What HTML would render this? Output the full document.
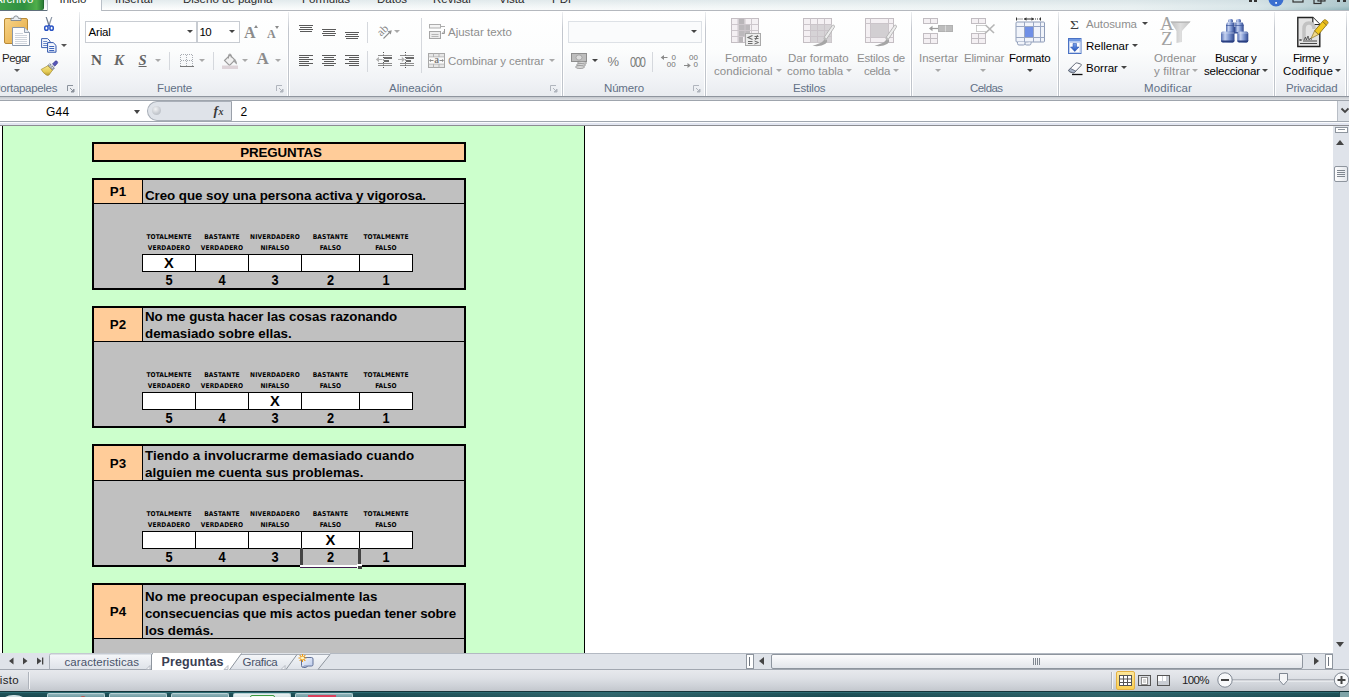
<!DOCTYPE html>
<html lang="es">
<head>
<meta charset="utf-8">
<title>Excel - Preguntas</title>
<style>
html,body{margin:0;padding:0;}
body{width:1349px;height:697px;overflow:hidden;position:relative;background:#fff;font-family:"Liberation Sans",sans-serif;font-size:11.5px;color:#1e1e1e;}
#app{position:absolute;left:0;top:0;width:1349px;height:697px;overflow:hidden;}
#app div,#app span,#app svg{position:absolute;white-space:nowrap;}
#app svg{overflow:visible;}
/* top tab strip */
#tabstrip{left:0;top:0;width:1349px;height:10px;background:linear-gradient(rgba(205,219,223,.55) 0%,rgba(225,234,236,.35) 60%,rgba(255,255,255,0) 100%),linear-gradient(90deg,#ffffff 0%,#f7fafa 55%,#ebf2f3 84%,#d7e5e8 93%,#8fb3b9 100%);border-bottom:1px solid #b4b8be;}
.tab{top:-7.500px;font-size:11.5px;line-height:13px;color:#2a2a2a;}
#ribbon{left:0;top:11px;width:1349px;height:86px;background:linear-gradient(#ffffff 0%,#fcfdfd 45%,#f1f3f6 80%,#e8ebef 100%);}
.gsep{top:12px;width:1px;height:84px;background:linear-gradient(rgba(196,201,208,.3),#c3c7ce 20%,#bfc4cb 100%);box-shadow:1px 0 0 rgba(255,255,255,.95),-1px 0 0 rgba(255,255,255,.95);}
.glabel{top:82px;color:#627086;font-size:11.5px;line-height:13px;}
.rt{font-size:11.5px;line-height:13px;color:#1e1e1e;}
.dis{color:#8e8e8e;}
.arr{width:0;height:0;border-left:3px solid transparent;border-right:3px solid transparent;border-top:3px solid #444;}
.arr.d{border-top-color:#a9a9a9;}
.isep{width:1px;height:18px;background:#d5d8dd;}
.combo{height:19px;border:1px solid #c8ccd2;background:#fff;box-sizing:content-box;}
/* formula */
#fbar{left:0;top:97px;width:1349px;height:29px;background:#fff;}
/* sheet */
#sheet{left:0;top:126px;width:1333px;height:527px;background:#fff;overflow:hidden;}
.q{background:#c0c0c0;border:2px solid #000;box-sizing:border-box;left:92px;width:374px;}
.q .pl{left:0;top:0;width:48px;background:#fc9;border-right:1px solid #000;font:bold 13.33px "Liberation Sans",sans-serif;text-align:center;color:#000;}
.q .qt{left:51px;font:bold 13.33px/17px "Liberation Sans",sans-serif;color:#000;}
.q .hl{left:0;width:370px;height:1px;background:#000;}
.lab{font:bold 6.6px/11px "DejaVu Sans Condensed","DejaVu Sans","Liberation Sans",sans-serif;text-align:center;color:#000;letter-spacing:.12px;}
.num{font:bold 13.33px/15px "Liberation Sans",sans-serif;text-align:center;color:#000;transform:scale(.96,1.1);transform-origin:50% 80%;}
.box{background:#fff;border:1px solid #000;box-sizing:border-box;height:18px;font:bold 14.67px/16px "Liberation Sans",sans-serif;text-align:center;color:#000;}
/* bottom */
#tabsbar{left:0;top:653px;width:1349px;height:17px;background:#dfe3e9;}
#status{left:0;top:670px;width:1349px;height:21px;background:linear-gradient(#e7e9ed 0%,#dde0e5 40%,#ced2d8 75%,#c3c7cd 100%);}
#taskbar{left:0;top:691px;width:1349px;height:6px;background:linear-gradient(90deg,rgba(255,255,255,0) 0%,rgba(255,255,255,0) 28%,rgba(120,180,185,.22) 45%,rgba(255,255,255,0) 62%,rgba(120,180,185,.2) 82%,rgba(255,255,255,0) 100%),linear-gradient(#3d7077,#1f5259 40%,#1a4a51);}
.tb{top:693px;width:58px;height:6px;box-sizing:border-box;border:1px solid #b9d2d6;border-bottom:none;border-radius:2px 2px 0 0;background:linear-gradient(#8fb4ba,#5c8b93);}

</style>
</head>
<body>
<div id="app">
<!-- tabs.html -->
<div id="tabstrip">
 <div style="left:0;top:0;width:43px;height:10px;border-radius:0 0 2px 0;background:linear-gradient(90deg,#3fa048 0%,#2f9040 55%,#4fae4a 85%,#2a7d36 100%);border-right:1px solid #1f6a2c;"></div>
 <div class="under-archivo" style="left:0;top:10px;width:47px;height:1px;background:#5f6f7c;"></div>
 <span class="tab" style="left:-5px;color:#fff;">Archivo</span>
 <div style="left:47px;top:-4px;width:53px;height:15px;background:#fff;border:1px solid #b9c0c8;border-bottom:none;border-radius:3px 3px 0 0;"></div>
 <span class="tab" style="left:59.500px;">Inicio</span>
 <span class="tab" style="left:115px;">Insertar</span>
 <span class="tab" style="left:183px;">Diseño de página</span>
 <span class="tab" style="left:302px;">Fórmulas</span>
 <span class="tab" style="left:377px;">Datos</span>
 <span class="tab" style="left:433px;">Revisar</span>
 <span class="tab" style="left:499px;">Vista</span>
 <span class="tab" style="left:552px;">PDF</span>
 <!-- top-right window icons (clipped) -->
 <svg style="left:1240px;top:1px" width="109" height="10" viewBox="0 0 109 10">
  <rect x="9" y="-3" width="3" height="4" fill="#333"/><rect x="14" y="-3" width="3" height="4" fill="#333"/>
  <circle cx="36" cy="-2" r="7.5" fill="#3b6fd0"/><rect x="35.3" y="1" width="1.6" height="1.8" fill="#fff"/>
  <rect x="53" y="-3" width="10" height="4" fill="none" stroke="#333" stroke-width="1.2"/>
  <rect x="74" y="-3" width="7" height="5.5" fill="none" stroke="#333" stroke-width="1.2"/><rect x="78" y="-4" width="7" height="4" fill="none" stroke="#333" stroke-width="1.2"/>
  <rect x="97" y="-3" width="3" height="4" fill="#333"/><rect x="103" y="-3" width="3" height="4" fill="#333"/>
 </svg>
</div>

<!-- ribbon1.html -->
<div id="ribbon"></div>
<!-- ===== Portapapeles ===== -->
<svg style="left:3px;top:15px" width="30" height="33" viewBox="0 0 30 33">
 <defs><linearGradient id="gclip" x1="0" y1="0" x2="1" y2="1"><stop offset="0" stop-color="#f7d48a"/><stop offset="1" stop-color="#e5a93e"/></linearGradient></defs>
 <rect x="1.5" y="3.5" width="23" height="25" rx="1.5" fill="url(#gclip)" stroke="#b98a36" stroke-width="1"/>
 <path d="M8 5.5 h10 v-2.2 h-2.6 a2.4 2.4 0 0 0 -4.8 0 h-2.6z" fill="#e9edf2" stroke="#7d848d" stroke-width=".9"/>
 <path d="M9.5 12.5 h12 l5 5 v13 h-17z" fill="#fdfdfe" stroke="#8a97a8" stroke-width="1"/>
 <path d="M21.5 12.5 v5 h5" fill="#e4e9f0" stroke="#8a97a8" stroke-width=".9"/>
 <path d="M12 18.5h8M12 20.5h12M12 22.5h12M12 24.5h12M12 26.5h12M12 28.5h12" stroke="#c3c9d2" stroke-width=".8"/>
</svg>
<span class="rt" style="left:2px;top:52px;letter-spacing:-0.52px;">Pegar</span>
<div class="arr" style="left:14px;top:69px;border-top-color:#5a5a5a;"></div>
<!-- scissors -->
<svg style="left:43px;top:16px" width="12" height="16" viewBox="0 0 12 16">
 <path d="M2.600 1 L3.800 1 L6.800 9.500 L5.600 10.500z" fill="#6f7c8f"/>
 <path d="M9.400 1 L8.200 1 L5.200 9.500 L6.400 10.500z" fill="#8b96a6"/>
 <ellipse cx="3.400" cy="12.200" rx="1.700" ry="2.100" fill="none" stroke="#2b54c4" stroke-width="1.500"/>
 <ellipse cx="8.600" cy="12.200" rx="1.700" ry="2.100" fill="none" stroke="#2b54c4" stroke-width="1.500"/>
 <path d="M4.400 10.600L6 9M7.600 10.600L6 9" stroke="#2b54c4" stroke-width="1.300" fill="none"/>
</svg>
<!-- copy -->
<svg style="left:41px;top:38px" width="16" height="15" viewBox="0 0 16 15">
 <path d="M.6 .6 h6 l2.4 2.4 v6.6 h-8.4z" fill="#f4f7fc" stroke="#3b5fb0" stroke-width="1"/>
 <path d="M2.2 3.5h4M2.2 5.5h5M2.2 7.5h5" stroke="#5a7cc4" stroke-width=".9"/>
 <path d="M6.6 4.6 h5.6 l2.8 2.8 v6.8 h-8.4z" fill="#f4f7fc" stroke="#2f55ad" stroke-width="1"/>
 <path d="M8.2 8.5h5M8.2 10.5h5M8.2 12.5h5" stroke="#3f66bb" stroke-width="1"/>
</svg>
<div class="arr" style="left:61px;top:44px;border-top-color:#555"></div>
<!-- format painter -->
<svg style="left:41px;top:60px" width="17" height="16" viewBox="0 0 17 16">
 <defs><linearGradient id="gbr" x1="0" y1="0" x2="0" y2="1"><stop offset="0" stop-color="#f5e58c"/><stop offset=".6" stop-color="#e6cc55"/><stop offset="1" stop-color="#b59a35"/></linearGradient></defs>
 <path d="M11.500 4 L14 1.300 a1.600 1.600 0 0 1 2.300 2.200 L13.800 6.200z" fill="#5656b8" stroke="#33338a" stroke-width=".6"/>
 <path d="M8.800 3.600 l4.600 4.400 -2 2.200 -4.600 -4.400z" fill="#a9aeb8" stroke="#5d636d" stroke-width=".7"/>
 <path d="M8 5 l1.500 -1.500 M9.500 6.500 l1.500 -1.500 M11 8 l1.500 -1.500" stroke="#e8eaee" stroke-width=".7"/>
 <path d="M6.800 5.800 l4.600 4.400 -3.400 4.800 q-1.500 1 -3 -.2 q-3 -2 -4.800 -5.400z" fill="url(#gbr)" stroke="#a88f30" stroke-width=".7"/>
</svg>
<span class="glabel" style="left:-7px;letter-spacing:-0.30px;">Portapapeles</span>
<svg class="launch" style="left:67px;top:85px" width="8" height="8" viewBox="0 0 8 8"><path d="M.5 6V.5H6" fill="none" stroke="#8b929c" stroke-width="1"/><path d="M3 3l3.5 3.5M7 4v3H4z" stroke="#8b929c" stroke-width="1" fill="#8b929c"/></svg>
<div class="gsep" style="left:79px;"></div>

<!-- ===== Fuente ===== -->
<div class="combo" style="left:85px;top:21px;width:110px;height:20px;"></div>
<span class="rt" style="left:88.500px;top:26px;font-size:11.500px;color:#000;letter-spacing:-0.16px;">Arial</span>
<div class="arr" style="left:187px;top:30px;"></div>
<div class="combo" style="left:197px;top:21px;width:41px;height:20px;"></div>
<span class="rt" style="left:199.500px;top:26px;font-size:11.500px;color:#000;letter-spacing:-0.70px;">10</span>
<div class="arr" style="left:229px;top:30px;"></div>
<span style="left:244px;top:23px;font:bold 16px/20px 'Liberation Serif',serif;color:#8c8c8c;">A</span>
<div style="left:254px;top:25px;width:0;height:0;border-left:2.5px solid transparent;border-right:2.5px solid transparent;border-bottom:3px solid #8a8a8a;"></div>
<span style="left:267px;top:26px;font:bold 12px/16px 'Liberation Serif',serif;color:#8c8c8c;">A</span>
<div class="arr d" style="left:275px;top:26px;border-left-width:2.5px;border-right-width:2.5px;border-top-color:#8a8a8a"></div>
<span style="left:91px;top:52px;font:bold 14px/18px 'Liberation Serif',serif;color:#5c5c5c;transform:scaleX(1.08);transform-origin:0 0;">N</span>
<span style="left:114px;top:51px;font:italic bold 15px/18px 'Liberation Serif',serif;color:#666;">K</span>
<span style="left:138.500px;top:51px;font:italic bold 14.500px/18px 'Liberation Serif',serif;color:#666;text-decoration:underline;">S</span>
<div class="arr d" style="left:155px;top:59px;"></div>
<div class="isep" style="left:169px;top:52px;"></div>
<svg style="left:180px;top:54px" width="14" height="14" viewBox="0 0 14 14" shape-rendering="crispEdges"><path d="M.5 .5h12M.5 6.5h12M.5 .5v12M6.5 .5v12M12.500 .5v12" stroke="#a9adb3" stroke-width="1" stroke-dasharray="1 1" fill="none"/><path d="M0 12.500h13.500" stroke="#777" stroke-width="1.200"/></svg>
<div class="arr d" style="left:199px;top:59px;"></div>
<div class="isep" style="left:213px;top:52px;"></div>
<svg style="left:222px;top:53px" width="17" height="16" viewBox="0 0 17 16">
 <path d="M2.500 7.500 L8 2 L13 7 L7.500 12.500z" fill="#f0f0f0" stroke="#9a9a9a" stroke-width="1.100"/>
 <path d="M6.500 5.500 V2.500 a1.400 1.400 0 0 1 2.800 0 V4.500" fill="none" stroke="#9a9a9a" stroke-width="1"/>
 <path d="M12 6 q3 1 3 5.500 q-2.500 -1 -3.500 -4z" fill="#a0a0a0"/>
 <rect x="0" y="12.500" width="16" height="3.500" fill="#ddd3d8"/>
</svg>
<div class="arr d" style="left:242px;top:59px;"></div>
<span style="left:256.500px;top:49px;font:bold 17px/20px 'Liberation Serif',serif;color:#8c8c8c;">A</span>
<div class="arr d" style="left:275px;top:59px;"></div>
<span class="glabel" style="left:157px;letter-spacing:-0.14px;">Fuente</span>
<svg class="launch" style="left:276px;top:85px" width="8" height="8" viewBox="0 0 8 8"><path d="M.5 6V.5H6" fill="none" stroke="#b0b5bd" stroke-width="1"/><path d="M3 3l3.500 3.500M7 4v3H4z" stroke="#b0b5bd" stroke-width="1" fill="#b0b5bd"/></svg>
<div class="gsep" style="left:288px;"></div>

<!-- ribbon2.html -->
<!-- ===== Alineación ===== -->
<svg style="left:298px;top:22px" width="62" height="46" viewBox="0 0 62 46">
 <g stroke="#5a5a5a" stroke-width="1" fill="none">
  <!-- top / middle / bottom vertical alignment -->
  <path d="M1 3.500h14M2 5.500h12M1 7.500h14M2 9.500h12"/>
  <path d="M24 7.500h14M25 9.500h12M24 11.500h14M25 13.500h12"/>
  <path d="M47 10.500h14M48 12.500h12M47 14.500h14M48 16.500h12"/>
  <!-- left / center / right -->
  <path d="M1 33.500h14M1 35.500h10M1 37.500h14M1 39.500h10M1 41.500h14M1 43.500h10"/>
  <path d="M24 33.500h14M26 35.500h10M24 37.500h14M26 39.500h10M24 41.500h14M26 43.500h10"/>
  <path d="M47 33.500h14M51 35.500h10M47 37.500h14M51 39.500h10M47 41.500h14M51 43.500h10"/>
 </g>
</svg>
<div class="isep" style="left:367px;top:22px;height:21px;"></div>
<div class="isep" style="left:367px;top:51px;height:21px;"></div>
<!-- orientation -->
<svg style="left:376px;top:23px" width="18" height="17" viewBox="0 0 18 17">
 <text x="0" y="0" transform="translate(5.300 13.800) rotate(-45)" font-family="Liberation Serif,serif" font-size="11.500" fill="#858585">ab</text>
 <path d="M7.500 15.500 L14.500 8.500" stroke="#8f8f8f" stroke-width="1.100" fill="none"/><path d="M15.800 7.200 l-4.200 1 3.200 3.200z" fill="#8f8f8f"/>
</svg>
<div class="arr d" style="left:394px;top:30px;"></div>
<!-- indent icons -->
<svg style="left:375px;top:52px" width="40" height="16" viewBox="0 0 40 16">
 <g fill="none" stroke="#8d8d8d" stroke-width="1">
  <path d="M3 3.500h14M3 11.500h14M3 13.500h14"/>
  <path d="M25 3.500h14M25 11.500h14M25 13.500h14"/>
 </g>
 <g fill="#6b6b6b"><rect x="9" y="5" width="8" height="2"/><rect x="9" y="8" width="5" height="2"/><rect x="31" y="5" width="8" height="2"/><rect x="31" y="8" width="5" height="2"/></g>
 <path d="M8.500 0v16M30.500 0v16" stroke="#555" stroke-width="1" stroke-dasharray="1 1.500" fill="none"/>
 <path d="M2.500 7.500h5M23 7.500h5" stroke="#b3b3b3" stroke-width="1.200" fill="none"/>
 <path d="M.8 7.500l3.200-2.800v5.600zM30 7.500l-3.200-2.800v5.600z" fill="#b3b3b3"/>
</svg>
<div class="isep" style="left:421px;top:18px;height:55px;"></div>
<!-- wrap text icon -->
<svg style="left:428px;top:24px" width="18" height="16" viewBox="0 0 18 16">
 <rect x="1.500" y=".5" width="11" height="3.500" fill="#f4f4f4" stroke="#adadad"/>
 <rect x="1.500" y="7.500" width="11" height="7" fill="#ececec" stroke="#a5a5a5"/>
 <path d="M3.500 10.500h7M3.500 12.500h7" stroke="#b5b5b5"/>
 <path d="M12.500 2.500h4.500" fill="none" stroke="#adadad"/>
 <path d="M16.500 5v4.500h-2.500M14 9.500l2.500-2.500" fill="none" stroke="#9a9a9a" stroke-width="1"/>
</svg>
<span class="rt dis" style="left:448px;top:26px;">Ajustar texto</span>
<!-- merge icon -->
<svg style="left:428px;top:53px" width="18" height="16" viewBox="0 0 18 16">
 <rect x=".5" y=".5" width="16" height="14" fill="#e6e6e6" stroke="#a8a8a8"/>
 <path d="M.5 4h16M.5 11h16M5.500 .5v3.500M11 .5v3.500M5.500 11v3.500M11 11v3.500" stroke="#b3b3b3" fill="none"/>
 <rect x="1" y="4.500" width="15" height="6" fill="#fafafa"/>
 <text x="8.500" y="10.300" font-family="Liberation Serif,serif" font-weight="bold" font-size="9.500" text-anchor="middle" fill="#7c7c7c">a</text>
 <path d="M2 7.500h3.500M11.500 7.500h3.500" stroke="#8a8a8a" stroke-width="1"/><path d="M1 7.500l2-1.500v3zM16 7.500l-2-1.500v3z" fill="#8a8a8a"/>
</svg>
<span class="rt dis" style="left:448px;top:55px;letter-spacing:-0.09px;">Combinar y centrar</span>
<div class="arr d" style="left:549px;top:59px;"></div>
<span class="glabel" style="left:389px;">Alineación</span>
<svg class="launch" style="left:550px;top:85px" width="8" height="8" viewBox="0 0 8 8"><path d="M.5 6V.5H6" fill="none" stroke="#b0b5bd" stroke-width="1"/><path d="M3 3l3.500 3.500M7 4v3H4z" stroke="#b0b5bd" stroke-width="1" fill="#b0b5bd"/></svg>
<div class="gsep" style="left:562px;"></div>

<!-- ===== Número ===== -->
<div class="combo" style="left:568px;top:21px;width:132px;height:20px;background:#fafbfc;border-color:#dde1e6;"></div>
<div class="arr" style="left:691px;top:30px;"></div>
<!-- currency icon -->
<svg style="left:571px;top:53px" width="18" height="16" viewBox="0 0 18 16">
 <rect x=".5" y=".5" width="15" height="8" fill="#bdbdbd" stroke="#8e8e8e"/>
 <ellipse cx="8" cy="4.500" rx="3" ry="2.600" fill="#dcdcdc" stroke="#9a9a9a" stroke-width=".7"/>
 <g fill="#d9d9d9" stroke="#8e8e8e" stroke-width=".8"><ellipse cx="11" cy="10" rx="4.500" ry="1.500"/><ellipse cx="10" cy="12" rx="4.500" ry="1.500"/><ellipse cx="9" cy="14" rx="4.500" ry="1.500"/></g>
</svg>
<div class="arr" style="left:592px;top:59px;"></div>
<span style="left:607.500px;top:53px;font:13px/18px 'Liberation Sans',sans-serif;color:#7c7c7c;">%</span>
<span style="left:630px;top:53px;font:11px/18px 'Liberation Sans',sans-serif;color:#7c7c7c;letter-spacing:-1.200px;transform:scaleY(1.250);">000</span>
<div class="isep" style="left:652px;top:52px;height:20px;"></div>
<svg style="left:661px;top:53px" width="38" height="16" viewBox="0 0 38 16">
 <g font-family="Liberation Sans,sans-serif" font-size="8" fill="#737373">
  <text x="10.500" y="6.800">0</text><text x="5.800" y="14.300">00</text>
  <text x="28" y="6.800">00</text><text x="32.500" y="14.300">0</text>
 </g>
 <path d="M1 4.500h5.500M23 12.500h5.500" stroke="#8a8a8a" stroke-width="1.100" fill="none"/>
 <path d="M-.3 4.500l3.300-2.600v5.200z M29.800 12.500l-3.300-2.600v5.200z" fill="#8a8a8a"/>
</svg>
<span class="glabel" style="left:604px;letter-spacing:-0.17px;">Número</span>
<svg class="launch" style="left:693px;top:85px" width="8" height="8" viewBox="0 0 8 8"><path d="M.5 6V.5H6" fill="none" stroke="#b0b5bd" stroke-width="1"/><path d="M3 3l3.500 3.500M7 4v3H4z" stroke="#b0b5bd" stroke-width="1" fill="#b0b5bd"/></svg>
<div class="gsep" style="left:705px;"></div>

<!-- ribbon3.html -->
<!-- ===== Estilos ===== -->
<!-- Formato condicional -->
<svg style="left:731px;top:18px" width="31" height="29" viewBox="0 0 31 29">
 <rect x=".5" y=".5" width="27" height="24" fill="#f4f0f3" stroke="#c4bec3"/>
 <rect x="7.500" y="1" width="6" height="6" fill="#b9b6b9"/><rect x="7.500" y="7" width="11.500" height="11.500" fill="#bcb9bc"/><rect x="7.500" y="18.500" width="4.500" height="6" fill="#b9b6b9"/>
 <path d="M.5 6.500h27M.5 12.500h27M.5 18.500h27M7 .5v24M14 .5v24M20.500 .5v24" stroke="#cdc7cc" fill="none"/>
 <rect x="14.500" y="15.500" width="15" height="12" fill="#ececec" stroke="#a9a9a9"/>
 <path d="M21.500 17.500l-4.500 2 4.500 2M17 23.500h4.500M17 25.500h4.500" stroke="#6c6c6c" stroke-width="1.100" fill="none"/>
 <path d="M23.500 18.500h4M23.500 20.500h4M26.500 17l-2 5M23.500 23l4 1.500-4 1.500" stroke="#6c6c6c" stroke-width="1" fill="none"/>
</svg>
<span class="rt dis" style="left:725px;top:52px;letter-spacing:-0.13px;">Formato</span>
<span class="rt dis" style="left:714px;top:65px;letter-spacing:0.10px;">condicional</span>
<div class="arr d" style="left:776px;top:69px;"></div>
<!-- Dar formato como tabla -->
<svg style="left:803px;top:18px" width="32" height="29" viewBox="0 0 32 29">
 <rect x=".5" y=".5" width="28" height="24" fill="#f4f0f3" stroke="#c4bec3"/>
 <rect x="7.500" y="6.500" width="21" height="18" fill="#d6d3d6"/>
 <path d="M.5 6.500h28M.5 12.500h28M.5 18.500h28M7.500 .5v24M14.500 .5v24M21.500 .5v24" stroke="#cbc5ca" fill="none"/>
 <path d="M21.500 20.500 q-1 3.500 -5.500 5 q-3 1.200 -6.500 2.300 q8.500 1.200 13 -2 q2.500 -2 1.500 -3.800z" fill="#a6a6a6"/>
 <path d="M29.300 7.500 L21.200 19.300 L23.600 21 L31.300 9.300 q.6 -1.600 -.4 -2.100 q-.9 -.5 -1.600 .3z" fill="#ededed" stroke="#ababab" stroke-width=".8"/>
 <path d="M21.200 19.300 l2.400 1.700 l-1 1.500 l-2.400 -1.700z" fill="#bdbdbd"/>
</svg>
<span class="rt dis" style="left:788px;top:52px;">Dar formato</span>
<span class="rt dis" style="left:787px;top:65px;">como tabla</span>
<div class="arr d" style="left:846px;top:69px;"></div>
<!-- Estilos de celda -->
<svg style="left:865px;top:18px" width="32" height="29" viewBox="0 0 32 29">
 <rect x=".5" y=".5" width="28" height="24" fill="#f4f0f3" stroke="#c4bec3"/>
 <path d="M.5 5.500h28M.5 19.500h28M5.500 .5v24M23.500 .5v24" stroke="#cbc5ca" fill="none"/>
 <rect x="6" y="6" width="17" height="13" fill="#d2cfd2"/>
 <path d="M21.500 20.500 q-1 3.500 -5.500 5 q-3 1.200 -6.500 2.300 q8.500 1.200 13 -2 q2.500 -2 1.500 -3.800z" fill="#a6a6a6"/>
 <path d="M29.300 7.500 L21.200 19.300 L23.600 21 L31.300 9.300 q.6 -1.600 -.4 -2.100 q-.9 -.5 -1.600 .3z" fill="#ededed" stroke="#ababab" stroke-width=".8"/>
 <path d="M21.200 19.300 l2.400 1.700 l-1 1.500 l-2.400 -1.700z" fill="#bdbdbd"/>
</svg>
<span class="rt dis" style="left:857px;top:52px;letter-spacing:-0.18px;">Estilos de</span>
<span class="rt dis" style="left:864px;top:65px;letter-spacing:-0.28px;">celda</span>
<div class="arr d" style="left:893px;top:69px;"></div>
<span class="glabel" style="left:793px;letter-spacing:-0.22px;">Estilos</span>
<div class="gsep" style="left:911px;"></div>

<!-- ===== Celdas ===== -->
<svg style="left:922px;top:18px" width="32" height="27" viewBox="0 0 32 27">
 <g fill="#f4f0f3" stroke="#c2bdc2"><rect x="1.500" y=".5" width="14" height="5"/><rect x="1.500" y="15.500" width="14" height="10"/></g>
 <path d="M8.500 .5v5M8.500 15.500v10M1.500 20.500h14" stroke="#c2bdc2" fill="none"/>
 <rect x="16.500" y="7.500" width="14" height="6" fill="#bdbdbd" stroke="#b1b1b1"/><path d="M23.500 7.500v6" stroke="#dadada"/>
 <path d="M8.500 10.500h7.500" stroke="#9c9c9c" stroke-width="1.200"/><path d="M7 10.500l3.500-2.700v5.400z" fill="#9c9c9c"/>
</svg>
<span class="rt dis" style="left:919px;top:52px;">Insertar</span>
<div class="arr d" style="left:935px;top:69px;"></div>
<svg style="left:971px;top:18px" width="25" height="27" viewBox="0 0 25 27">
 <g fill="#f4f0f3" stroke="#c2bdc2"><rect x=".5" y=".5" width="14" height="5"/><rect x=".5" y="15.500" width="14" height="10"/></g>
 <path d="M7.500 .5v5M7.500 15.500v10M.5 20.500h14" stroke="#c2bdc2" fill="none"/>
 <path d="M5.500 7.500h9M5.500 13.500h9M5.500 7.500v6" fill="none" stroke="#9d9d9d" stroke-dasharray="1 1"/>
 <path d="M14.500 7l8.500 8M23.500 6.500l-9.500 9" stroke="#b5b5b5" stroke-width="1.600" fill="none"/>
</svg>
<span class="rt dis" style="left:964px;top:52px;letter-spacing:-0.19px;">Eliminar</span>
<div class="arr d" style="left:980px;top:69px;"></div>
<svg style="left:1015px;top:16px" width="31" height="30" viewBox="0 0 31 30">
 <path d="M1.500 1.500v3M25.500 1.500v3M9 3h10" stroke="#333" stroke-width="1" fill="none"/><path d="M2.500 3h6M20 3h5" stroke="#333" stroke-dasharray="1 1" fill="none"/>
 <path d="M9 3l2.500-1.800v3.600zM19 3l-2.500-1.800v3.600z" fill="#333"/>
 <rect x="1" y="6" width="28.500" height="20" rx="1" fill="#f1f4fa" stroke="#8e9cb8"/>
 <path d="M1 10.500h28.500M1 21.500h28.500M9.500 6v20M18.500 6v20M25.500 6v20" stroke="#9aa7c2" fill="none"/>
 <rect x="10" y="11" width="8" height="10" fill="#6f8fe6"/>
 <path d="M2.500 26v1.500q0 1.500 1.500 1.500h4.500q1.500 0 1.500-1.500V26M10 27.500q0 1.500 1.500 1.500h3q1.500 0 1.500-1.500V26" fill="#f1f4fa" stroke="#8e9cb8"/>
</svg>
<span class="rt" style="left:1009px;top:52px;color:#000;letter-spacing:-0.18px;">Formato</span>
<div class="arr" style="left:1027px;top:69px;"></div>
<span class="glabel" style="left:970px;letter-spacing:-0.54px;">Celdas</span>
<div class="gsep" style="left:1058px;"></div>

<!-- ===== Modificar ===== -->
<span style="left:1069.500px;top:15.500px;font:13.500px/18px 'Liberation Serif',serif;color:#3c3c3c;transform:scaleX(1.150);transform-origin:0 0;">Σ</span>
<span class="rt dis" style="left:1086px;top:18px;letter-spacing:-0.11px;">Autosuma</span>
<div class="arr" style="left:1142px;top:22px;"></div>
<svg style="left:1068px;top:38px" width="14" height="16" viewBox="0 0 14 16">
 <defs><linearGradient id="gfill" x1="0" y1="0" x2="0" y2="1"><stop offset="0" stop-color="#7aa3ee"/><stop offset="1" stop-color="#1f50b8"/></linearGradient></defs>
 <rect x=".5" y=".5" width="12.500" height="15" fill="#fbfcfe" stroke="#4a72c4"/>
 <rect x="1" y="1" width="11.500" height="2.500" fill="#6f98e2"/>
 <rect x="1.500" y="4.500" width="10.500" height="10" fill="none" stroke="#c5d3ee"/>
 <path d="M5 5.500h3.500v3.500h2.500L6.750 13.500 2.500 9H5z" fill="url(#gfill)" stroke="#1d49a6" stroke-width=".5"/>
</svg>
<span class="rt" style="left:1086px;top:40px;color:#000;">Rellenar</span>
<div class="arr" style="left:1132px;top:44px;"></div>
<svg style="left:1068px;top:62px" width="15" height="13" viewBox="0 0 15 13">
 <path d="M.8 8 L7.500 1.300 q.8 -.6 1.800 -.3 l3.400 1 q1 .6 .3 1.600 L6.500 10.400 q-.8 .6 -1.800 .3 L1.400 9.600 q-1 -.6 -.6 -1.600z" fill="#fbfbfd" stroke="#4f5868" stroke-width=".9"/>
 <path d="M.8 8 q-.3 1 .6 1.600 l3.300 1.100 q1 .3 1.800 -.3 l1.300 -1.300 l-5.200 -2.600z" fill="#aab6cc" stroke="#4f5868" stroke-width=".7"/>
 <path d="M4 12.500h10.500" stroke="#111" stroke-width="1.300"/>
</svg>
<span class="rt" style="left:1086px;top:62px;color:#000;">Borrar</span>
<div class="arr" style="left:1121px;top:66px;"></div>
<!-- sort & filter -->
<svg style="left:1160px;top:16px" width="32" height="31" viewBox="0 0 32 31">
 <defs><linearGradient id="gfun" x1="0" y1="0" x2="1" y2="0"><stop offset="0" stop-color="#bdbdbd"/><stop offset=".5" stop-color="#dedede"/><stop offset="1" stop-color="#c4c4c4"/></linearGradient></defs>
 <path d="M10.500 5.500 h20 l-8.500 9.500 v11 l-5.500 1 V15z" fill="url(#gfun)"/>
 <path d="M10.500 5.500h20l-1.300 1.500h-17.400z" fill="#b9b9b9"/>
 <text x="0" y="14.300" font-family="Liberation Serif,serif" font-size="19" fill="#a2a2a2">A</text>
 <text x="1" y="29.300" font-family="Liberation Serif,serif" font-size="19" fill="#a2a2a2">Z</text>
</svg>
<span class="rt dis" style="left:1154px;top:52px;">Ordenar</span>
<span class="rt dis" style="left:1154px;top:65px;letter-spacing:0.16px;">y filtrar</span>
<div class="arr d" style="left:1192px;top:69px;"></div>
<!-- binoculars -->
<svg style="left:1220px;top:18px" width="30" height="26" viewBox="0 0 30 26">
 <defs><linearGradient id="gbin" x1="0" y1="0" x2="1" y2="0"><stop offset="0" stop-color="#526cb0"/><stop offset=".3" stop-color="#c3d0f0"/><stop offset=".65" stop-color="#748dca"/><stop offset="1" stop-color="#2f468b"/></linearGradient></defs>
 <rect x="12" y="9" width="6" height="6.500" fill="#3b5398"/>
 <rect x="8.300" y="1" width="4.600" height="3.800" rx="1.500" fill="url(#gbin)"/><rect x="16.300" y="1" width="4.600" height="3.800" rx="1.500" fill="url(#gbin)"/>
 <path d="M7 4.500h7.500v9.500h-8.500v-7z" fill="url(#gbin)"/><path d="M15.200 4.500h7.500l1 2.500v7h-8.500z" fill="url(#gbin)"/>
 <path d="M6 7.500h8.500M15.200 7.500h8.500" stroke="#3b5398" stroke-width=".7"/>
 <rect x="1" y="13.500" width="13.500" height="11" rx="2" fill="url(#gbin)"/>
 <rect x="17.300" y="13.500" width="11" height="11" rx="2" fill="url(#gbin)"/>
 <path d="M1 22.500q0 2 2 2h9.500q2 0 2-2zM17.300 22.500q0 2 2 2h7q2 0 2-2z" fill="#2a3f80"/>
 <path d="M1.500 15h12.500M17.800 15h10" stroke="#dfe7f8" stroke-width=".8" opacity=".7"/>
</svg>
<span class="rt" style="left:1215px;top:52px;color:#000;letter-spacing:-0.43px;">Buscar y</span>
<span class="rt" style="left:1204px;top:65px;color:#000;letter-spacing:-0.22px;">seleccionar</span>
<div class="arr" style="left:1262px;top:69px;"></div>
<span class="glabel" style="left:1144px;letter-spacing:0.16px;">Modificar</span>
<div class="gsep" style="left:1274px;"></div>

<!-- ===== Privacidad ===== -->
<svg style="left:1297px;top:16px" width="32" height="32" viewBox="0 0 32 32">
 <path d="M.8 1.500h15l7 7v22H.8z" fill="#e3e3e3" stroke="#222" stroke-width="1.400"/>
 <path d="M15.800 1.500v7h7" fill="#fff" stroke="#222" stroke-width="1.200"/>
 <path d="M7 24V13q0-6 5-6t5 6" fill="none" stroke="#c2c2c2" stroke-width="3.500"/>
 <path d="M2.500 23l2 2m0-2l-2 2M6 25h14M3 27.500h17" stroke="#333" stroke-width=".9" fill="none"/>
 <path d="M7 24l1.500-3 1 3 1.500-4 1 4 1.500-2 1 2" stroke="#444" stroke-width=".8" fill="none"/>
 <path d="M17.500 15 L25.500 5.500 l4 3.500 L21.500 18.500z" fill="#f2c81e" stroke="#7c6410" stroke-width=".8"/>
 <path d="M17.500 15l4 3.500-7.500 4z" fill="#f1d98a" stroke="#7c6410" stroke-width=".6"/>
 <path d="M25.500 5.500l1.300-1.500q1-.8 2.200 0l1.800 1.600q.8 1 0 2L29.500 9z" fill="#e3b21a" stroke="#7c6410" stroke-width=".6"/>
</svg>
<span class="rt" style="left:1293px;top:52px;color:#000;letter-spacing:-0.42px;">Firme y</span>
<span class="rt" style="left:1283px;top:65px;color:#000;letter-spacing:0.15px;">Codifique</span>
<div class="arr" style="left:1335px;top:69px;"></div>
<span class="glabel" style="left:1286px;letter-spacing:-0.24px;">Privacidad</span>
<div class="gsep" style="left:1346px;"></div>

<!-- formula.html -->
<!-- ribbon bottom edge + formula bar -->
<div style="left:0;top:96px;width:1349px;height:1px;background:#8f959e;"></div>
<div style="left:0;top:97px;width:1349px;height:3px;background:linear-gradient(#c4c8cd,#e0e2e6);"></div>
<div style="left:0;top:100px;width:1349px;height:1px;background:#9fa5ad;"></div>
<div id="fbar" style="top:101px;height:20px;"></div>
<span class="rt" style="left:46px;top:105.500px;font-size:12px;color:#000;letter-spacing:0.20px;">G44</span>
<div class="arr" style="left:134px;top:110px;border-top-width:4px;border-left-width:3.500px;border-right-width:3.500px;"></div>
<div style="left:147px;top:101px;width:85px;height:20px;box-sizing:border-box;background:#dfe3e9;border:1px solid #a9afb8;border-radius:11px 0 0 11px;border-right-color:#9aa0a9;"></div>
<div style="left:152px;top:106px;width:9px;height:9px;border-radius:5px;background:radial-gradient(circle at 40% 35%,#f2f3f5,#c4c8ce 60%,#b3b8bf);"></div>
<span style="left:213.500px;top:102px;font:italic bold 13.500px/18px 'Liberation Serif',serif;color:#3a3a3a;">f</span><span style="left:218.500px;top:106.500px;font:italic bold 10px/10px 'Liberation Serif',serif;color:#3a3a3a;">x</span>
<span class="rt" style="left:240.500px;top:105.500px;font-size:12px;color:#000;">2</span>
<div style="left:1337px;top:101px;width:12px;height:20px;background:#dfe3e9;border-left:1px solid #b9bec6;box-sizing:border-box;"></div>
<svg style="left:1339.500px;top:107px" width="10" height="7" viewBox="0 0 10 7"><path d="M1.500 1.500L5 5l3.500-3.500" stroke="#444" stroke-width="1.800" fill="none"/></svg>
<div style="left:0;top:121px;width:1349px;height:1px;background:#9fa6af;"></div>
<div style="left:0;top:122px;width:1349px;height:1px;background:#fafbfd;"></div>
<div style="left:0;top:123px;width:1349px;height:2px;background:#e1e5f0;"></div>
<div style="left:0;top:125px;width:1349px;height:1px;background:#8c8d92;"></div>

<!-- sheet.html -->
<div id="sheet">
 <div style="left:2px;top:0;width:1px;height:527px;background:#000"></div>
 <div style="left:3px;top:0;width:581px;height:527px;background:#cfc"></div>
 <div style="left:584px;top:0;width:1px;height:527px;background:#000"></div>
 <div style="left:92px;top:16px;width:374px;height:20px;box-sizing:border-box;border:2px solid #000;background:#fc9;font:bold 13.33px/18px 'Liberation Sans',sans-serif;text-align:center;padding-left:4px;letter-spacing:-0.15px;color:#000">PREGUNTAS</div>
 <div class="q" style="top:52px;height:112px">
  <div class="pl" style="height:23px;line-height:24px">P1</div>
  <div class="qt" style="top:7px;letter-spacing:-0.047px">Creo que soy una persona activa y vigorosa.</div>
  <div class="hl" style="top:23px"></div>
  <div class="lab" style="left:38px;width:74px;top:52px">TOTALMENTE<br>VERDADERO</div>
  <div class="box" style="left:48px;width:54px;top:74px">X</div>
  <div class="num" style="left:48px;width:54px;top:93px">5</div>
  <div class="lab" style="left:91px;width:74px;top:52px">BASTANTE<br>VERDADERO</div>
  <div class="box" style="left:101px;width:54px;top:74px"></div>
  <div class="num" style="left:101px;width:54px;top:93px">4</div>
  <div class="lab" style="left:144px;width:74px;top:52px">NIVERDADERO<br>NIFALSO</div>
  <div class="box" style="left:154px;width:54px;top:74px"></div>
  <div class="num" style="left:154px;width:54px;top:93px">3</div>
  <div class="lab" style="left:197px;width:79px;top:52px">BASTANTE<br>FALSO</div>
  <div class="box" style="left:207px;width:59px;top:74px"></div>
  <div class="num" style="left:207px;width:59px;top:93px">2</div>
  <div class="lab" style="left:255px;width:74px;top:52px">TOTALMENTE<br>FALSO</div>
  <div class="box" style="left:265px;width:54px;top:74px"></div>
  <div class="num" style="left:265px;width:54px;top:93px">1</div>
 </div>
 <div class="q" style="top:180px;height:122px">
  <div class="pl" style="height:33px;line-height:34px">P2</div>
  <div class="qt" style="top:0px;letter-spacing:-0.051px">No me gusta hacer las cosas razonando</div>
  <div class="qt" style="top:17px;letter-spacing:0.000px">demasiado sobre ellas.</div>
  <div class="hl" style="top:33px"></div>
  <div class="lab" style="left:38px;width:74px;top:62px">TOTALMENTE<br>VERDADERO</div>
  <div class="box" style="left:48px;width:54px;top:84px"></div>
  <div class="num" style="left:48px;width:54px;top:103px">5</div>
  <div class="lab" style="left:91px;width:74px;top:62px">BASTANTE<br>VERDADERO</div>
  <div class="box" style="left:101px;width:54px;top:84px"></div>
  <div class="num" style="left:101px;width:54px;top:103px">4</div>
  <div class="lab" style="left:144px;width:74px;top:62px">NIVERDADERO<br>NIFALSO</div>
  <div class="box" style="left:154px;width:54px;top:84px">X</div>
  <div class="num" style="left:154px;width:54px;top:103px">3</div>
  <div class="lab" style="left:197px;width:79px;top:62px">BASTANTE<br>FALSO</div>
  <div class="box" style="left:207px;width:59px;top:84px"></div>
  <div class="num" style="left:207px;width:59px;top:103px">2</div>
  <div class="lab" style="left:255px;width:74px;top:62px">TOTALMENTE<br>FALSO</div>
  <div class="box" style="left:265px;width:54px;top:84px"></div>
  <div class="num" style="left:265px;width:54px;top:103px">1</div>
 </div>
 <div class="q" style="top:318px;height:123px">
  <div class="pl" style="height:34px;line-height:35px">P3</div>
  <div class="qt" style="top:1px;letter-spacing:0.074px">Tiendo a involucrarme demasiado cuando</div>
  <div class="qt" style="top:18px;letter-spacing:0.022px">alguien me cuenta sus problemas.</div>
  <div class="hl" style="top:34px"></div>
  <div class="lab" style="left:38px;width:74px;top:63px">TOTALMENTE<br>VERDADERO</div>
  <div class="box" style="left:48px;width:54px;top:85px"></div>
  <div class="num" style="left:48px;width:54px;top:104px">5</div>
  <div class="lab" style="left:91px;width:74px;top:63px">BASTANTE<br>VERDADERO</div>
  <div class="box" style="left:101px;width:54px;top:85px"></div>
  <div class="num" style="left:101px;width:54px;top:104px">4</div>
  <div class="lab" style="left:144px;width:74px;top:63px">NIVERDADERO<br>NIFALSO</div>
  <div class="box" style="left:154px;width:54px;top:85px"></div>
  <div class="num" style="left:154px;width:54px;top:104px">3</div>
  <div class="lab" style="left:197px;width:79px;top:63px">BASTANTE<br>FALSO</div>
  <div class="box" style="left:207px;width:59px;top:85px">X</div>
  <div class="num" style="left:207px;width:59px;top:104px">2</div>
  <div class="lab" style="left:255px;width:74px;top:63px">TOTALMENTE<br>FALSO</div>
  <div class="box" style="left:265px;width:54px;top:85px"></div>
  <div class="num" style="left:265px;width:54px;top:104px">1</div>
 </div>
 <div class="q" style="top:457px;height:150px">
  <div class="pl" style="height:53px;line-height:54px">P4</div>
  <div class="qt" style="top:3px;letter-spacing:0.061px">No me preocupan especialmente las</div>
  <div class="qt" style="top:20px;letter-spacing:-0.100px">consecuencias que mis actos puedan tener sobre</div>
  <div class="qt" style="top:37px;letter-spacing:-0.040px">los demás.</div>
  <div class="hl" style="top:53px"></div>
  <div class="lab" style="left:38px;width:74px;top:90px">TOTALMENTE<br>VERDADERO</div>
  <div class="box" style="left:48px;width:54px;top:112px"></div>
  <div class="num" style="left:48px;width:54px;top:131px">5</div>
  <div class="lab" style="left:91px;width:74px;top:90px">BASTANTE<br>VERDADERO</div>
  <div class="box" style="left:101px;width:54px;top:112px"></div>
  <div class="num" style="left:101px;width:54px;top:131px">4</div>
  <div class="lab" style="left:144px;width:74px;top:90px">NIVERDADERO<br>NIFALSO</div>
  <div class="box" style="left:154px;width:54px;top:112px"></div>
  <div class="num" style="left:154px;width:54px;top:131px">3</div>
  <div class="lab" style="left:197px;width:79px;top:90px">BASTANTE<br>FALSO</div>
  <div class="box" style="left:207px;width:59px;top:112px"></div>
  <div class="num" style="left:207px;width:59px;top:131px">2</div>
  <div class="lab" style="left:255px;width:74px;top:90px">TOTALMENTE<br>FALSO</div>
  <div class="box" style="left:265px;width:54px;top:112px"></div>
  <div class="num" style="left:265px;width:54px;top:131px">1</div>
 </div>
 <div style="left:300px;top:422px;width:3px;height:17px;background:#444"></div>
 <div style="left:358px;top:422px;width:3px;height:16px;background:#444"></div>
 <div style="left:300px;top:439px;width:57px;height:2px;background:#fff"></div>
 <div style="left:300px;top:441px;width:57px;height:1px;background:#402050"></div>
 <div style="left:357px;top:438px;width:5px;height:4px;background:#fff"></div>
 <div style="left:358px;top:440px;width:4px;height:3px;background:#444"></div>
</div>

<!-- bottom.html -->
<!-- vertical scrollbar -->
<div style="left:1333px;top:126px;width:16px;height:527px;background:#dfe3ea;"></div>
<div style="left:1335px;top:127px;width:13px;height:6px;box-sizing:border-box;border:1px solid #8e959e;background:#fff;"></div>
<div style="left:1338px;top:129px;width:7px;height:1px;background:#8e959e;"></div>
<div style="left:1336px;top:140px;width:0;height:0;border-left:4.500px solid transparent;border-right:4.500px solid transparent;border-bottom:5px solid #444;"></div>
<div style="left:1334px;top:166px;width:14px;height:16px;box-sizing:border-box;border:1px solid #8e959e;border-radius:2px;background:linear-gradient(90deg,#fdfdfe,#e4e7ec);"></div>
<div style="left:1337px;top:170px;width:8px;height:1px;background:#7f868f;box-shadow:0 2px 0 #7f868f,0 4px 0 #7f868f,0 6px 0 #7f868f;"></div>
<div style="left:1336px;top:642px;width:0;height:0;border-left:4.500px solid transparent;border-right:4.500px solid transparent;border-top:5px solid #444;"></div>
<!-- sheet tabs bar -->
<div id="tabsbar"></div>
<div class="tabsbar-top" style="left:330px;top:653px;width:1003px;height:1px;background:#b3b9c2;"></div>
<div style="left:0;top:669px;width:1349px;height:1px;background:#a1a7b0;"></div>
<svg style="left:0;top:653px" width="340" height="17" viewBox="0 0 340 17">
 <defs><linearGradient id="gtab" x1="0" y1="0" x2="0" y2="1"><stop offset="0" stop-color="#f4f6f9"/><stop offset="1" stop-color="#dfe3e9"/></linearGradient></defs>
 <!-- nav arrows -->
 <path d="M13.500 4.500v7l-4.500-3.500zM23 4.500v7l4.500-3.500zM37 4.500v7l4.500-3.500z" fill="#444"/><rect x="42" y="4.500" width="1.300" height="7" fill="#444"/>
 <!-- tabs -->
 <path d="M49.500 16.500V2.500q0-1.500 1.500-1.500H151" fill="none" stroke="#a9afb8"/>
 <path d="M50 16V2.500q0-1 1-1h100V16z" fill="url(#gtab)"/>
 <path d="M241 1.500H297L286 16.500H229z" fill="url(#gtab)"/>
 <path d="M297 1.500H330L318 16.500H286z" fill="url(#gtab)"/>
 <path d="M241 1.500H330" stroke="#a9afb8" fill="none"/>
 <path d="M297 1.500L286 16.500M330 1.500L318 16.500" stroke="#8e959e" fill="none"/>
 <path d="M151.500 17V1.500q0-1.500 1.500-1.500H241.500L229.500 17z" fill="#fff"/><path d="M151.500 17V2q0-1.500 1.500-1.500M241.500 .5L229.500 17" fill="none" stroke="#8e959e"/>
 <path d="M146 16.500l4-4v4zM224 16.500l4-4v4zM281 16.500l4-4v4z" fill="#f4f6f9" stroke="#a9afb8" stroke-width=".8"/>
 <!-- new sheet icon -->
 <defs><linearGradient id="gns" x1="0" y1="0" x2="1" y2="1"><stop offset="0" stop-color="#f4f7fe"/><stop offset="1" stop-color="#b9c9ea"/></linearGradient></defs>
 <g transform="translate(0 -1)"><path d="M303 5.500h8.500q1.500 0 1.500 1.500v5.500q0 1.500-1.500 1.500h-4q-.5 1.500-2.500 1.500h-1.500q-2 0-2-2V7q0-1.500 1.500-1.500z" fill="url(#gns)" stroke="#53648f" stroke-width=".9"/>
 <path d="M307.500 14h-3q-1 0-1 1" fill="none" stroke="#53648f" stroke-width=".7"/></g>
 <path d="M302.500 1v8M298.500 5h8M299.700 2.200l5.600 5.600M305.300 2.200l-5.600 5.600" stroke="#ee9a12" stroke-width="1.100"/><circle cx="302.500" cy="5" r="1.600" fill="#fff6c4"/>
</svg>
<span class="rt" style="left:64.500px;top:655.500px;color:#49536a;letter-spacing:0.07px;">caracteristicas</span>
<span class="rt" style="left:161.500px;top:656px;color:#3a4052;font-weight:bold;font-size:12.500px;letter-spacing:.1px;">Preguntas</span>
<span class="rt" style="left:242.500px;top:655.500px;color:#49536a;letter-spacing:-0.30px;">Grafica</span>
<!-- horizontal scrollbar -->
<div style="left:746px;top:654px;width:8px;height:15px;box-sizing:border-box;border:1px solid #8e959e;background:#fff;"></div>
<div style="left:749px;top:657px;width:1px;height:9px;background:#6f7680;"></div>
<div style="left:759px;top:657px;width:0;height:0;border-top:4.500px solid transparent;border-bottom:4.500px solid transparent;border-right:5px solid #444;"></div>
<div style="left:771px;top:654px;width:532px;height:15px;box-sizing:border-box;border:1px solid #8e959e;border-radius:2px;background:linear-gradient(#fcfcfd,#e3e6eb);"></div>
<div style="left:1033px;top:658px;width:1px;height:7px;background:#7f868f;box-shadow:2px 0 0 #7f868f,4px 0 0 #7f868f,6px 0 0 #7f868f;"></div>
<div style="left:1314px;top:657px;width:0;height:0;border-top:4.500px solid transparent;border-bottom:4.500px solid transparent;border-left:5px solid #444;"></div>
<div style="left:1325px;top:654px;width:8px;height:15px;box-sizing:border-box;border:1px solid #8e959e;background:#fff;"></div>
<div style="left:1328px;top:657px;width:1px;height:9px;background:#6f7680;"></div>
<div style="left:1333px;top:653px;width:16px;height:16px;background:#dfe3ea;"></div>
<!-- status bar -->
<div id="status"></div>
<span class="rt" style="left:-7px;top:674px;color:#222;letter-spacing:0.34px;">Listo</span>
<div style="left:28px;top:672px;width:1px;height:17px;background:#aeb3bb;box-shadow:1px 0 0 #f3f4f6;"></div>
<div style="left:1111px;top:672px;width:1px;height:17px;background:#aeb3bb;box-shadow:1px 0 0 #f3f4f6;"></div>
<div style="left:1116px;top:671px;width:19px;height:19px;box-sizing:border-box;border:1px solid #e3b144;border-radius:2px;background:linear-gradient(#fde79a,#fbd051);"></div>
<svg style="left:1119px;top:675px" width="52" height="12" viewBox="0 0 52 12">
 <rect x=".5" y=".5" width="12" height="10" fill="#fff" stroke="#555"/><path d="M.5 4h12M.5 7.500h12M4.500 .5v10M8.500 .5v10" stroke="#555" fill="none"/>
 <rect x="19.500" y=".5" width="12" height="10" fill="#d9dce1" stroke="#555"/><rect x="22.500" y="2.500" width="6" height="7" fill="#fff" stroke="#777" stroke-width=".8"/><path d="M24 5h3M24 7h3" stroke="#888" stroke-width=".7"/>
 <rect x="38.500" y=".5" width="12" height="10" fill="#c9cdd3" stroke="#555"/><rect x="39" y="1" width="4" height="5" fill="#fff"/><rect x="44" y="1" width="3" height="5" fill="#fff"/>
</svg>
<span class="rt" style="left:1182px;top:674px;color:#222;letter-spacing:-0.61px;">100%</span>
<svg style="left:1215px;top:671px" width="134" height="18" viewBox="0 0 134 18">
 <path d="M17 9h102" stroke="#8a9099" stroke-width="1"/><path d="M17 10h102" stroke="#f6f7f9" stroke-width="1"/>
 <circle cx="10" cy="9" r="7.200" fill="#f7f8fa" stroke="#7f8792"/><rect x="6" y="8" width="8" height="2" fill="#444"/>
 <circle cx="126.500" cy="9" r="7.200" fill="#f7f8fa" stroke="#7f8792"/><rect x="122.500" y="8" width="8" height="2" fill="#444"/><rect x="125.500" y="5" width="2" height="8" fill="#444"/>
 <path d="M64.500 2.500h8v7l-4 4.500-4-4.500z" fill="#f4f5f7" stroke="#7f8792"/>
</svg>
<!-- taskbar sliver -->
<div id="taskbar"></div>
<div style="left:0;top:691px;width:1349px;height:1px;background:#16353b;"></div>
<div style="left:0;top:692px;width:1349px;height:1px;background:#2c6a72;"></div>
<div style="left:-3px;top:695px;width:30px;height:30px;border-radius:16px;border:2px solid #cfe0e4;background:#5d8f99;"></div>
<div class="tb" style="left:47px;"></div><div class="tb" style="left:109px;"></div><div class="tb" style="left:171px;"></div>
<div class="tb" style="left:233px;background:linear-gradient(#e9f0f1,#cbdcde);"></div><div class="tb" style="left:295px;"></div>
<div style="left:250px;top:695px;width:25px;height:4px;box-sizing:border-box;border:1px solid #3a9a3f;border-radius:2px 2px 0 0;background:#f4fbf4;"></div>
<div style="left:308px;top:695px;width:28px;height:3px;background:#d8405c;"></div>
<div style="left:80px;top:695.500px;width:6px;height:4px;border-radius:3px 3px 0 0;background:#b9534b;"></div>
<div style="left:1339px;top:692px;width:10px;height:7px;background:#7fa3a8;border-left:1px solid #244e55;"></div>

</div>
</body>
</html>
